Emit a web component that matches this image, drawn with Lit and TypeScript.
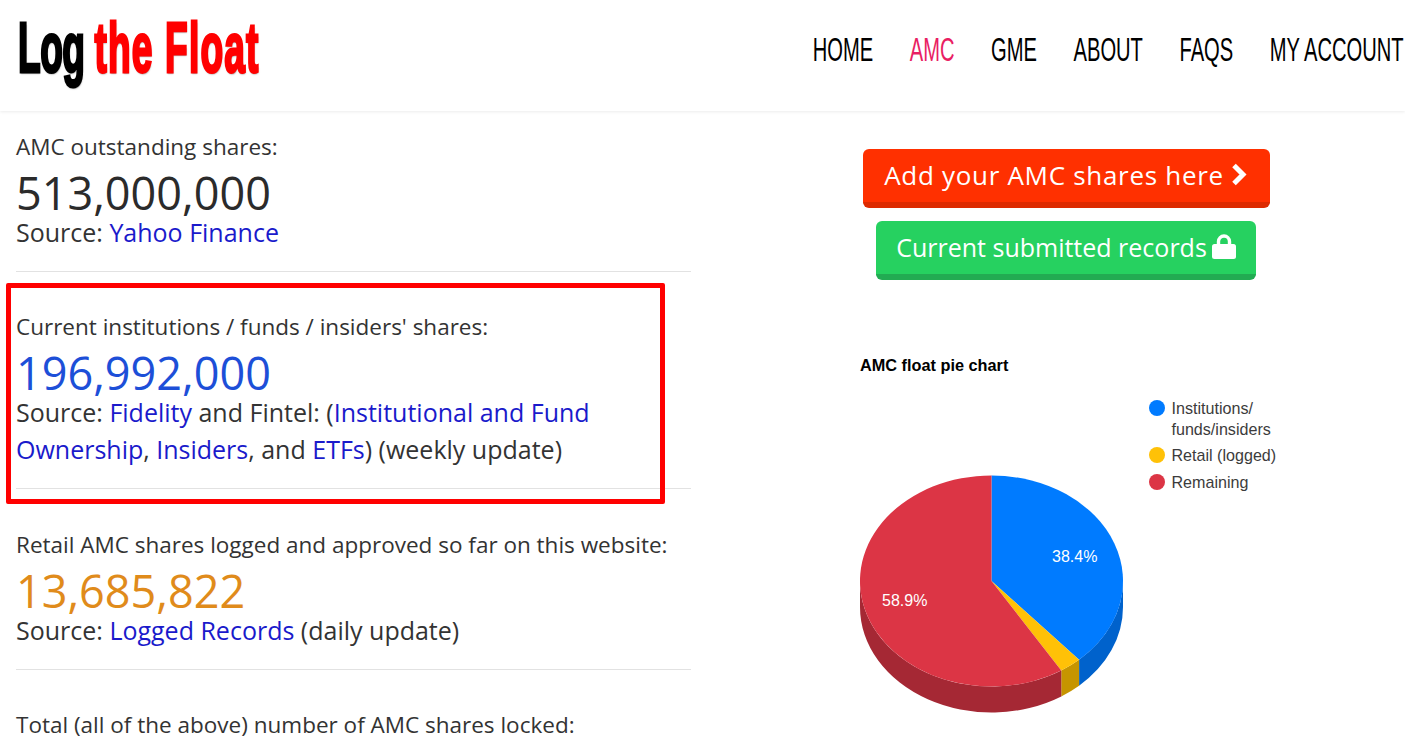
import { LitElement, html, css, svg } from "lit";
import { customElement } from "lit/decorators.js";

const slices = [
  { pct: 38.4, top: "#007bff", side: "#0062cc" },
  { pct: 2.7, top: "#ffc107", side: "#c69500" },
  { pct: 58.9, top: "#dc3545", side: "#a52834" },
];

const CX = 991.5;
const CY = 581;
const RX = 131.5;
const RY = 105.5;
const DEPTH = 26;

function pt(pct: number) {
  const a = (pct / 100) * Math.PI * 2;
  return { x: CX + RX * Math.sin(a), y: CY - RY * Math.cos(a) };
}

// flat top of a slice, between two cumulative percentages
function topPath(from: number, to: number) {
  const a = pt(from);
  const b = pt(to);
  const large = to - from > 50 ? 1 : 0;
  return `M${CX} ${CY}L${a.x} ${a.y}A${RX} ${RY} 0 ${large} 1 ${b.x} ${b.y}Z`;
}

// the visible rim, only drawn where the ellipse faces down (25% to 75%)
function sidePath(from: number, to: number) {
  const s = Math.max(from, 25);
  const e = Math.min(to, 75);
  if (e <= s) return "";
  const a = pt(s);
  const b = pt(e);
  return `M${a.x} ${a.y}A${RX} ${RY} 0 0 1 ${b.x} ${b.y}L${b.x} ${b.y + DEPTH}A${RX} ${RY} 0 0 0 ${a.x} ${a.y + DEPTH}Z`;
}

@customElement("app-root")
export class AppRoot extends LitElement {
  static styles = css`
    :host {
      display: block;
      height: 753px;
      overflow: hidden;
      background: #fff;
      font-family: "Open Sans", "Liberation Sans", sans-serif;
      color: #333;
    }

    header {
      height: 111px;
      display: flex;
      justify-content: space-between;
      box-shadow: 0 1px 3px rgba(0, 0, 0, 0.08);
      position: relative;
    }

    .logo {
      margin: 12px 0 0 18px;
      height: 72px;
      width: 250px;
      font-family: "Liberation Sans", Arial, sans-serif;
      font-weight: 700;
      font-size: 70px;
      line-height: 72px;
      white-space: nowrap;
      color: #000;
      letter-spacing: -1px;
      -webkit-text-stroke: 3px currentColor;
      text-shadow: 1px 2px 2px rgba(0, 0, 0, 0.35);
      transform: scaleX(0.53);
      transform-origin: left top;
    }

    .logo span {
      color: #f00;
      margin-left: 19px;
      letter-spacing: 2.2px;
    }

    nav {
      padding: 31px 1px 0 0;
    }

    nav ul {
      margin: 0;
      padding: 0;
      list-style: none;
      display: flex;
      gap: 60px;
      font-family: "Liberation Sans", sans-serif;
      font-size: 33px;
      line-height: 37px;
      color: #000;
      transform: scaleX(0.61);
      transform-origin: right top;
    }

    li.active {
      color: #e91e63;
    }

    main {
      display: grid;
      grid-template-columns: 707px 1fr;
    }

    .left {
      padding: 17px 16px 0;
    }

    section {
      padding-bottom: 20px;
      margin-bottom: 36px;
      border-bottom: 1px solid #e2e2e2;
    }

    section.tall {
      margin-bottom: 37px;
    }

    section.last {
      border: none;
    }

    .label {
      font-size: 22.5px;
      line-height: 37px;
      margin-bottom: 6px;
    }

    .num {
      font-size: 45px;
      line-height: 43px;
      color: #2b2b2b;
    }

    .num.blue {
      color: #1d4fd8;
    }

    .num.orange {
      color: #e08b1b;
    }

    .src {
      font-size: 25px;
      line-height: 37px;
    }

    .src a {
      color: #1a1acb;
      text-decoration: none;
    }

    .redbox {
      position: absolute;
      left: 6px;
      top: 283px;
      width: 649px;
      height: 211px;
      border: 5px solid #f00;
      border-radius: 2px;
      pointer-events: none;
    }

    .right {
      padding: 38px 0 0 20px;
      display: flex;
      flex-direction: column;
      align-items: center;
    }

    .btn {
      display: flex;
      align-items: center;
      justify-content: center;
      gap: 7px;
      box-sizing: border-box;
      height: 59px;
      padding-bottom: 2px;
      border-radius: 6px;
      color: #fff;
      font-size: 26px;
      text-decoration: none;
    }

    .btn.add {
      width: 407px;
      background: #ff3000;
      border-bottom: 6px solid #dd2a00;
      letter-spacing: 0.7px;
    }

    .btn.records {
      width: 380px;
      margin-top: 13px;
      gap: 5px;
      background: #26d160;
      border-bottom: 6px solid #22ab52;
      font-size: 25px;
    }

    .chart {
      display: block;
      width: 440px;
      height: 373px;
      margin-top: 70px;
    }

    .chart text {
      font-family: "Liberation Sans", Arial, sans-serif;
    }
  `;

  renderChart() {
    let sum = 0;
    const parts = slices.map((s) => {
      const from = sum;
      sum += s.pct;
      return { ...s, from, to: sum };
    });
    return html`
      <svg class="chart" viewBox="846 350 440 373">
        <text x="860" y="370.5" font-size="16.3" font-weight="700" fill="#000">AMC float pie chart</text>
        ${[["#007bff", 408, "Institutions/"], ["#ffc107", 455, "Retail (logged)"], ["#dc3545", 482, "Remaining"]].map(
          ([c, y, t]) => svg`
            <circle cx="1157" cy=${y} r="8" fill=${c}></circle>
            <text x="1171.5" y=${(y as number) + 5.5} font-size="16.1" fill="#3c3c3c">${t}</text>`
        )}
        <text x="1171.5" y="434.5" font-size="16.1" fill="#3c3c3c">funds/insiders</text>
        ${parts.map((p) => svg`<path d=${sidePath(p.from, p.to)} fill=${p.side}></path>`)}
        ${parts.map((p) => svg`<path d=${topPath(p.from, p.to)} fill=${p.top}></path>`)}
        <text x="1052" y="562" font-size="16" fill="#fff">38.4%</text>
        <text x="882" y="605.5" font-size="16" fill="#fff">58.9%</text>
      </svg>
    `;
  }

  render() {
    return html`
      <header>
        <div class="logo">Log<span>the Float</span></div>
        <nav>
          <ul>
            <li>HOME</li>
            <li class="active">AMC</li>
            <li>GME</li>
            <li>ABOUT</li>
            <li>FAQS</li>
            <li>MY ACCOUNT</li>
          </ul>
        </nav>
      </header>
      <main>
        <div class="left">
          <section>
            <div class="label">AMC outstanding shares:</div>
            <div class="num">513,000,000</div>
            <div class="src">Source: <a href="#">Yahoo Finance</a></div>
          </section>
          <section class="tall">
            <div class="label">Current institutions / funds / insiders' shares:</div>
            <div class="num blue">196,992,000</div>
            <div class="src">
              Source: <a href="#">Fidelity</a> and Fintel: (<a href="#">Institutional and Fund Ownership</a>,
              <a href="#">Insiders</a>, and <a href="#">ETFs</a>) (weekly update)
            </div>
          </section>
          <section>
            <div class="label">Retail AMC shares logged and approved so far on this website:</div>
            <div class="num orange">13,685,822</div>
            <div class="src">Source: <a href="#">Logged Records</a> (daily update)</div>
          </section>
          <section class="last">
            <div class="label">Total (all of the above) number of AMC shares locked:</div>
          </section>
        </div>
        <div class="right">
          <a class="btn add" href="#">
            Add your AMC shares here
            <svg width="17" height="23" viewBox="0 0 17 23">
              <path d="M3 2.5l9 9-9 9" fill="none" stroke="#fff" stroke-width="5"></path>
            </svg>
          </a>
          <a class="btn records" href="#">
            Current submitted records
            <svg width="24" height="25" viewBox="0 0 24 25">
              <path d="M6.5 11V7.5a5.5 5.5 0 0 1 11 0V11" fill="none" stroke="#fff" stroke-width="3.4"></path>
              <rect x="0" y="10" width="24" height="15" rx="2.5" fill="#fff"></rect>
            </svg>
          </a>
          ${this.renderChart()}
        </div>
      </main>
      <div class="redbox"></div>
    `;
  }
}
